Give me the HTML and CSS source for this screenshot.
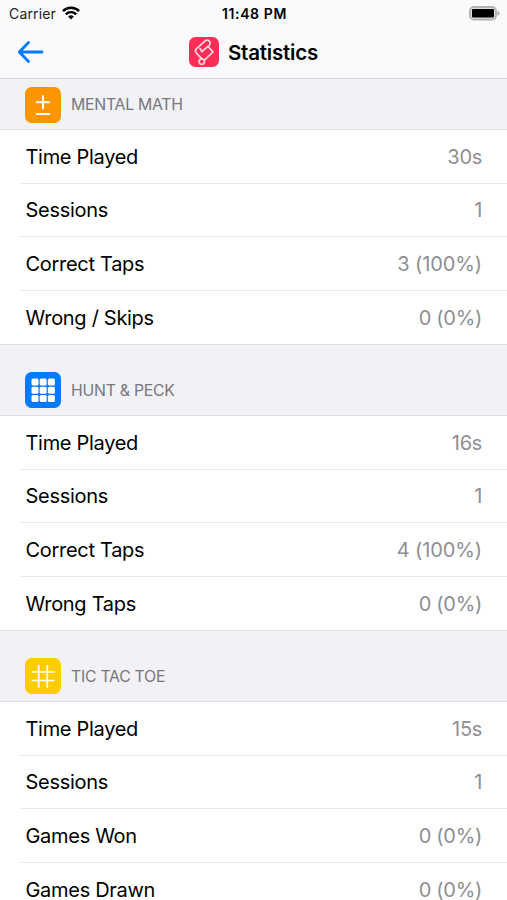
FILE: index.html
```html
<!DOCTYPE html>
<html lang="en">
<head>
<meta charset="utf-8">
<title>Statistics</title>
<link rel="stylesheet" href="styles.css">
</head>
<body>
<div class="screen">
  <header class="top">
    <div class="status">
      <div class="carrier"><span class="carrier-name">Carrier</span>
        <svg class="wifi" viewBox="0 0 18 14" width="18" height="14"><g fill="none" stroke="#000" stroke-width="2.4"><path d="M.9 5.1a11.5 11.5 0 0 1 16.2 0"/><path d="M3.8 8.3a7.4 7.4 0 0 1 10.4 0"/></g><path d="M9 13.4 6.1 10.6a4.2 4.2 0 0 1 5.8 0z"/></svg>
      </div>
      <div class="clock">11:48 PM</div>
      <svg class="battery" viewBox="0 0 31 15" width="31" height="15"><rect x="1" y="1" width="26" height="12.600" rx="3.800" fill="#ddd" stroke="#b2b2b2" stroke-width="1.800"/><rect x="3" y="3" width="22" height="8.600" rx="1"/><path d="M28.400 4.800v5q2-1 2-2.500t-2-2.500z" fill="#aaa"/></svg>
    </div>
    <nav class="nav">
      <svg class="back" viewBox="0 0 28 24" width="28" height="24"><path d="M11.500 2.500 2.300 12l9.200 9.500M3 12h22" fill="none" stroke="#007aff" stroke-width="2.800" stroke-linecap="round" stroke-linejoin="round"/></svg>
      <div class="title">
        <svg viewBox="0 0 30 30" width="30" height="30"><rect width="30" height="30" rx="6.500" fill="#ff2d55"/><g fill="none" stroke="#ffd3dc" stroke-width="1.700" stroke-linejoin="round" stroke-linecap="round"><path d="M13 14.500 20.300 8.300Q22 6.200 20.400 4.200 18.200 2.200 16 4L7.300 11.800Q5.700 13.700 7.200 15.800L13 21.800"/><path d="M13 14.500 11 11.500M19 9.500 24 14.800 15.500 23.200"/><circle cx="12.800" cy="24.600" r="2.700"/></g></svg>
        <h1>Statistics</h1>
      </div>
    </nav>
  </header>
  <main>
    <section>
      <div class="head first">
        <svg class="icon" viewBox="0 0 36 36"><rect width="36" height="36" rx="6.500" fill="#ff9500"/><path d="M11 15.200h14M18 8.200v14M11 27h14" stroke="#fff" stroke-width="1.900"/></svg>
        <h2>MENTAL MATH</h2>
      </div>
      <dl>
        <div class="row"><dt>Time Played</dt><dd>30s</dd></div>
        <div class="row"><dt>Sessions</dt><dd>1</dd></div>
        <div class="row"><dt>Correct Taps</dt><dd class="wide">3 (100%)</dd></div>
        <div class="row"><dt>Wrong / Skips</dt><dd>0 (0%)</dd></div>
      </dl>
    </section>
    <section>
      <div class="head">
        <svg class="icon" viewBox="0 0 36 36"><rect width="36" height="36" rx="6.500" fill="#007aff"/><g fill="#fff"><rect x="6.500" y="6.500" width="7" height="7" rx="1.500"/><rect x="14.700" y="6.500" width="7" height="7" rx="1.500"/><rect x="22.900" y="6.500" width="7" height="7" rx="1.500"/><rect x="6.500" y="14.700" width="7" height="7" rx="1.500"/><rect x="14.700" y="14.700" width="7" height="7" rx="1.500"/><rect x="22.900" y="14.700" width="7" height="7" rx="1.500"/><rect x="6.500" y="22.900" width="7" height="7" rx="1.500"/><rect x="14.700" y="22.900" width="7" height="7" rx="1.500"/><rect x="22.900" y="22.900" width="7" height="7" rx="1.500"/></g></svg>
        <h2>HUNT &amp; PECK</h2>
      </div>
      <dl>
        <div class="row"><dt>Time Played</dt><dd>16s</dd></div>
        <div class="row"><dt>Sessions</dt><dd>1</dd></div>
        <div class="row"><dt>Correct Taps</dt><dd class="wide">4 (100%)</dd></div>
        <div class="row"><dt>Wrong Taps</dt><dd>0 (0%)</dd></div>
      </dl>
    </section>
    <section>
      <div class="head">
        <svg class="icon" viewBox="0 0 36 36"><rect width="36" height="36" rx="6.500" fill="#fc0"/><path d="M6.500 14h23M6.500 22.500h23M13.700 7v23M22.300 7v23" stroke="#fff" stroke-width="1.700"/></svg>
        <h2>TIC TAC TOE</h2>
      </div>
      <dl>
        <div class="row"><dt>Time Played</dt><dd>15s</dd></div>
        <div class="row"><dt>Sessions</dt><dd>1</dd></div>
        <div class="row"><dt>Games Won</dt><dd>0 (0%)</dd></div>
        <div class="row"><dt>Games Drawn</dt><dd>0 (0%)</dd></div>
      </dl>
    </section>
  </main>
</div>
</body>
</html>
```
FILE: styles.css
```css
* { box-sizing: border-box; margin: 0; padding: 0; }
body { font-family: Inter, "Liberation Sans", sans-serif; color: #000; background: #fff; }
svg { display: block; flex: none; }
.screen { width: 507px; height: 900px; overflow: hidden; }
.top { height: 79px; background: #fafafc; border-bottom: 1px solid #d6d6da; }
.status { display: grid; grid-template-columns: 1fr auto 1fr; align-items: center; height: 27px; padding: 0 7px 0 9px; }
.carrier { display: flex; align-items: center; gap: 6px; font-size: 14px; letter-spacing: .15px; color: #222; }
.wifi { margin-top: -2px; }
.clock { font-size: 14px; font-weight: 600; letter-spacing: .6px; }
.battery { justify-self: end; }
.nav { display: grid; grid-template-columns: 1fr auto 1fr; align-items: center; height: 50px; padding: 0 17px; }
.title { display: flex; align-items: center; gap: 9px; }
h1 { padding-top: 1px; font-size: 20.500px; font-weight: 600; letter-spacing: -.2px; }
.head { display: flex; align-items: center; gap: 10px; height: 70.300px; padding: 21.300px 25px 0; background: #f1f1f6; }
.head.first { height: 50px; padding-top: 1px; }
.icon { width: 36px; height: 36px; }
h2 { font-size: 15.800px; font-weight: 400; letter-spacing: -.25px; color: #77777c; }
dl { border-top: 1px solid #dededf; border-bottom: 1px solid #dededf; }
.row { display: flex; align-items: center; justify-content: space-between; height: 53.670px; margin-left: 20px; padding: 1px 25px 0 5.500px; border-bottom: 1px solid #e9e9eb; font-size: 20px; letter-spacing: -.3px; }
.row:last-child { height: 52.700px; border-bottom: 0; }
dd { color: #8e8e93; }
.wide { letter-spacing: -.1px; }
```
